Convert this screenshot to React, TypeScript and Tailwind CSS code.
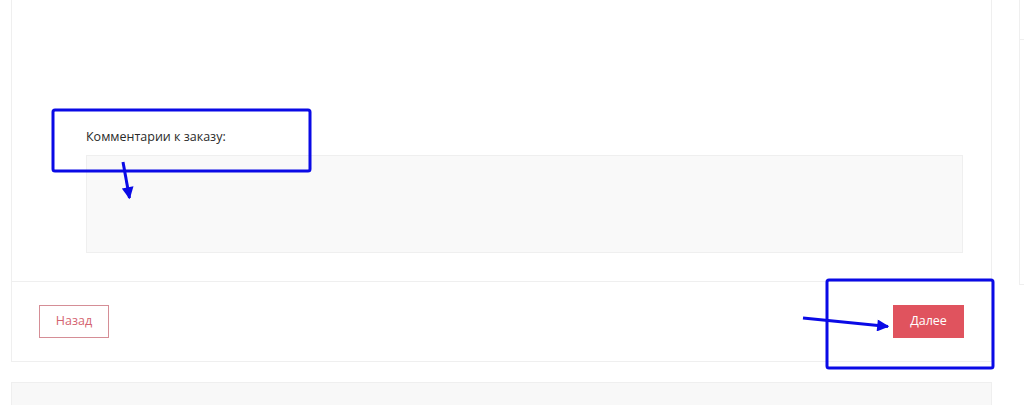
import React from "react";

function Annotations() {
  return (
    <svg
      className="pointer-events-none absolute inset-0 h-full w-full"
      viewBox="0 0 1024 405"
      aria-hidden
    >
      <defs>
        <marker id="head" viewBox="0 0 10 10" refX="9" refY="5" markerWidth="5" markerHeight="4" orient="auto">
          <path d="M0 0L10 5L0 10Z" fill="#0a0ae6" />
        </marker>
      </defs>
      <rect x="53" y="110" width="257" height="61" rx="2" fill="none" stroke="#0a0ae6" strokeWidth="3" />
      <line x1="123" y1="162" x2="129.5" y2="198" stroke="#0a0ae6" strokeWidth="3" markerEnd="url(#head)" />
      <rect x="827" y="280" width="166" height="88" rx="2" fill="none" stroke="#0a0ae6" strokeWidth="3" />
      <line x1="803" y1="318" x2="888" y2="326.5" stroke="#0a0ae6" strokeWidth="3" markerEnd="url(#head)" />
    </svg>
  );
}

export default function App() {
  return (
    <div className="relative h-[405px] w-[1024px] overflow-hidden bg-white font-['Open_Sans',sans-serif]">
      <div className="flex">
        <main className="ml-[11px] w-[981px] shrink-0">
          <section className="border border-t-0 border-[#efefef] bg-white">
            <div className="pl-[74px] pr-[28px] pt-[127px] pb-[28px]">
              <label className="block text-[12.5px] leading-5 text-[#2a2a2a]">Комментарии к заказу:</label>
              <textarea className="mt-2 block h-[98px] w-full resize-none border border-[#efefef] bg-[#f9f9f9] outline-none" />
            </div>
            <div className="flex items-center justify-between border-t border-[#efefef] px-[27px] py-[23px]">
              <button className="h-[33px] w-[70px] border border-[#d58e96] text-[12.5px] text-[#d4636f]">
                Назад
              </button>
              <button className="h-[33px] w-[71px] bg-[#e0535e] text-[12.5px] text-white">Далее</button>
            </div>
          </section>
          <section className="mt-5 h-[40px] border border-[#efefef] bg-[#f8f8f8]" />
        </main>
        <aside className="ml-[27px] flex-1">
          <div className="h-[285px] border border-t-0 border-r-0 border-[#efefef]">
            <div className="h-[40px] border-b border-[#efefef]" />
          </div>
        </aside>
      </div>
      <Annotations />
    </div>
  );
}
